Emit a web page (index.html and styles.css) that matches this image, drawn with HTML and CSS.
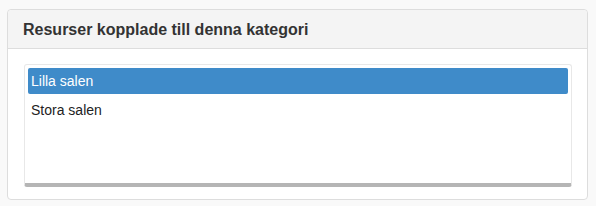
FILE: index.html
```html
<!DOCTYPE html>
<html lang="sv">
<head>
    <meta charset="UTF-8">
    <title>Resurser</title>
    <link rel="stylesheet" href="styles.css">
</head>
<body>

    <!-- Panel -->
    <div class="panel">
        <div class="panel-heading">
            <h3 class="panel-title">Resurser kopplade till denna kategori</h3>
        </div>
        <div class="panel-body">
            <div class="resource-list">
                <div class="resource-item selected">Lilla salen</div>
                <div class="resource-item">Stora salen</div>
            </div>
        </div>
    </div>

</body>
</html>
```

FILE: styles.css
```css
* {
    margin: 0;
    padding: 0;
    box-sizing: border-box;
}

body {
    font-family: "Liberation Sans", Arial, sans-serif;
    color: #333;
    background-color: #f9f9f9;
    padding: 9px 8px 0 7px;
}

/* Panel */
.panel {
    background-color: #fff;
    border: 1px solid #ddd;
    border-radius: 4px;
    height: 191px;
}

.panel-heading {
    background-color: #f4f4f4;
    border-bottom: 1px solid #ddd;
    border-radius: 4px 4px 0 0;
    height: 39px;
    padding: 1px 15px 0;
    display: flex;
    align-items: center;
}

.panel-title {
    font-size: 16px;
    font-weight: bold;
    color: #333;
}

.panel-body {
    padding: 15px 15px 0 16px;
}

/* Resource list */
.resource-list {
    border: 1px solid #e8e8e8;
    border-bottom: 4px solid #b5b5b5;
    border-radius: 3px;
    height: 123px;
    padding: 3px;
}

.resource-item {
    height: 26px;
    line-height: 27px;
    padding: 0 3px;
    margin-bottom: 3px;
    font-size: 14px;
    color: #222;
}

.resource-item.selected {
    background-color: #3f8bc9;
    color: #fff;
    border-radius: 2px;
}
```
